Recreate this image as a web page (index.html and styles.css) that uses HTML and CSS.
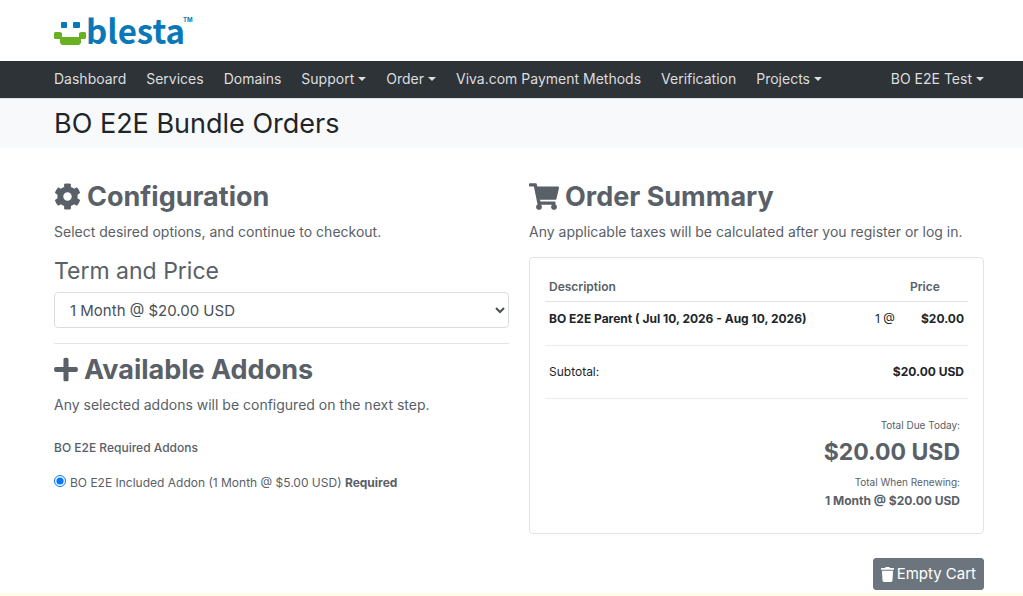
FILE: index.html
```html
<!DOCTYPE html>
<html lang="en">

<head>
    <meta charset="UTF-8">
    <meta name="viewport" content="width=device-width, initial-scale=1">
    <title>BO E2E Bundle Orders</title>
    <link rel="stylesheet" href="styles.css">
</head>

<body>
    <header class="header container">
        <a class="logo" href="#">
            <svg width="140" height="44" viewBox="0 0 140 44" role="img" aria-label="blesta">
                <g fill="#0878b8">
                    <rect x="7" y="14" width="6" height="6" rx="1" />
                    <rect x="19" y="14" width="7" height="6" rx="1" />
                    <text class="logo-text" x="32" y="36">blesta</text>
                    <text class="logo-tm" x="129" y="14">TM</text>
                </g>
                <path fill="#6ab023" d="M1 24h5l2 1v4h17v-4l2-1h4l1 1v5l-1 1h-4v4l-2 2H8l-2-2v-4H1l-1-1v-5z" />
            </svg>
        </a>
    </header>

    <nav class="navbar">
        <div class="container">
            <ul class="nav">
                <li><a href="#">Dashboard</a></li>
                <li><a href="#">Services</a></li>
                <li><a href="#">Domains</a></li>
                <li><a class="caret" href="#">Support</a></li>
                <li><a class="caret" href="#">Order</a></li>
                <li><a href="#">Viva.com Payment Methods</a></li>
                <li><a href="#">Verification</a></li>
                <li><a class="caret" href="#">Projects</a></li>
                <li class="account"><a class="caret" href="#">BO E2E Test</a></li>
            </ul>
        </div>
    </nav>

    <div class="title">
        <div class="container">
            <h1>BO E2E Bundle Orders</h1>
        </div>
    </div>

    <main class="container content">
        <section>
            <h2>
                <svg class="icon" width="27" height="27" viewBox="0 0 512 512" aria-hidden="true">
                    <path d="M487.400 315.700l-42.600-24.600c4.300-23.200 4.300-47 0-70.200l42.600-24.600c4.900-2.800 7.100-8.600 5.500-14-11.100-35.600-30-67.800-54.700-94.600-3.800-4.100-10-5.100-14.800-2.300L380.800 110c-17.900-15.400-38.500-27.300-60.800-35.100V25.800c0-5.600-3.900-10.500-9.400-11.700-36.700-8.200-74.300-7.800-109.200 0-5.500 1.200-9.400 6.100-9.400 11.700V75c-22.200 7.900-42.800 19.800-60.800 35.100L88.700 85.500c-4.900-2.800-11-1.900-14.800 2.300-24.700 26.700-43.600 58.900-54.700 94.600-1.700 5.400.6 11.200 5.500 14L67.300 221c-4.300 23.200-4.300 47 0 70.200l-42.600 24.600c-4.900 2.800-7.100 8.600-5.500 14 11.100 35.600 30 67.800 54.700 94.600 3.800 4.100 10 5.100 14.800 2.300l42.600-24.600c17.900 15.400 38.500 27.300 60.800 35.100v49.200c0 5.600 3.900 10.500 9.400 11.700 36.700 8.200 74.300 7.800 109.200 0 5.500-1.200 9.400-6.100 9.400-11.700v-49.200c22.200-7.900 42.800-19.800 60.800-35.100l42.600 24.600c4.900 2.800 11 1.900 14.800-2.300 24.700-26.700 43.600-58.900 54.700-94.600 1.500-5.500-.7-11.300-5.600-14.100zM256 336c-44.100 0-80-35.900-80-80s35.900-80 80-80 80 35.900 80 80-35.900 80-80 80z" />
                </svg>
                Configuration
            </h2>
            <p>Select desired options, and continue to checkout.</p>

            <label class="subtitle" for="term">Term and Price</label>
            <select class="form-control" id="term">
                <option>1 Month @ $20.00 USD</option>
            </select>

            <hr>

            <h2>
                <svg class="icon" width="24" height="27" viewBox="0 0 448 512" aria-hidden="true">
                    <path d="M416 208H272V64c0-17.700-14.300-32-32-32h-32c-17.700 0-32 14.300-32 32v144H32c-17.700 0-32 14.300-32 32v32c0 17.700 14.300 32 32 32h144v144c0 17.700 14.300 32 32 32h32c17.700 0 32-14.300 32-32V304h144c17.700 0 32-14.300 32-32v-32c0-17.700-14.300-32-32-32z" />
                </svg>
                Available Addons
            </h2>
            <p>Any selected addons will be configured on the next step.</p>

            <fieldset class="addons">
                <legend>BO E2E Required Addons</legend>
                <div class="radio">
                    <input type="radio" name="addon" id="addon" checked>
                    <label for="addon">BO E2E Included Addon (1 Month @ $5.00 USD) <strong>Required</strong></label>
                </div>
            </fieldset>
        </section>

        <section>
            <h2>
                <svg class="icon" width="30" height="27" viewBox="0 0 576 512" aria-hidden="true">
                    <path d="M528.100 301.300l47.300-208C578.800 78.300 567.400 64 552 64H159.200l-9.200-44.800C147.800 8 137.900 0 126.500 0H24C10.700 0 0 10.700 0 24v16c0 13.300 10.700 24 24 24h69.900l70.200 343.400C147.300 417.100 136 435.200 136 456c0 30.900 25.100 56 56 56s56-25.100 56-56c0-15.700-6.400-29.800-16.800-40h209.600C430.400 426.200 424 440.300 424 456c0 30.900 25.100 56 56 56s56-25.100 56-56c0-22.200-12.900-41.300-31.600-50.400l5.500-24.300c3.400-15-8-29.300-23.400-29.300H218.100l-6.500-32h293.100c11.200 0 20.900-7.800 23.400-18.700z" />
                </svg>
                Order Summary
            </h2>
            <p>Any applicable taxes will be calculated after you register or log in.</p>

            <div class="card">
                <table>
                    <thead>
                        <tr>
                            <th>Description</th>
                            <th class="qty"></th>
                            <th class="price">Price</th>
                        </tr>
                    </thead>
                    <tbody>
                        <tr>
                            <td><strong>BO E2E Parent ( Jul 10, 2026 - Aug 10, 2026)</strong></td>
                            <td class="qty">1 @</td>
                            <td class="amount">$20.00</td>
                        </tr>
                        <tr class="subtotal">
                            <td>Subtotal:</td>
                            <td class="amount" colspan="2">$20.00 USD</td>
                        </tr>
                    </tbody>
                </table>
                <div class="totals">
                    <small>Total Due Today:</small>
                    <strong class="due">$20.00 USD</strong>
                    <small>Total When Renewing:</small>
                    <strong>1 Month @ $20.00 USD</strong>
                </div>
            </div>

            <div class="actions">
                <button class="btn" type="button">
                    <svg width="13" height="15" viewBox="0 0 448 512" aria-hidden="true">
                        <path d="M432 32H312l-9.400-18.700A24 24 0 0 0 281.100 0H166.800a23.700 23.700 0 0 0-21.400 13.300L136 32H16A16 16 0 0 0 0 48v32a16 16 0 0 0 16 16h416a16 16 0 0 0 16-16V48a16 16 0 0 0-16-16zM53.200 467a48 48 0 0 0 47.900 45h245.800a48 48 0 0 0 47.900-45L416 128H32z" />
                    </svg>
                    Empty Cart
                </button>
            </div>
        </section>
    </main>

    <footer class="footer"></footer>
</body>

</html>
```

FILE: styles.css
```css
* {
    box-sizing: border-box;
}

body {
    margin: 0;
    font-family: Inter, "Liberation Sans", sans-serif;
    font-size: 14px;
    line-height: 20px;
    color: #596067;
    background: #fff;
}

.container {
    padding: 0 39px 0 54px;
}

/* header */
.header {
    height: 61px;
    padding-top: 8px;
}

.logo {
    display: inline-block;
}

.logo svg {
    display: block;
    overflow: visible;
}

.logo-text {
    font-family: "Noto Sans CJK SC", sans-serif;
    font-size: 33px;
    font-weight: bold;
}

.logo-tm {
    font-size: 6px;
    font-weight: bold;
}

/* navigation */
.navbar {
    background: #2e3338;
    border-bottom: 1px solid #dee2e6;
}

.nav {
    display: flex;
    gap: 20px;
    margin: 0;
    padding: 8px 0 9px;
    list-style: none;
    white-space: nowrap;
}

.nav a {
    color: #dcdddf;
    text-decoration: none;
}

.account {
    margin-left: auto;
}

.caret::after {
    content: "";
    display: inline-block;
    margin-left: 4px;
    vertical-align: 3px;
    border: 4px solid transparent;
    border-top-color: currentColor;
    border-bottom: 0;
}

/* page title */
.title {
    background: #f8f9fb;
}

.title h1 {
    margin: 0;
    padding: 8px 0 7px;
    font-size: 27px;
    font-weight: 400;
    line-height: 34px;
    color: #212529;
}

/* content */
.content {
    display: grid;
    grid-template-columns: 1fr 1fr;
    gap: 20px;
    padding-top: 32px;
}

h2 {
    display: flex;
    align-items: center;
    gap: 6px;
    margin: 0 0 8px;
    font-size: 27px;
    font-weight: 700;
    line-height: 34px;
}

.icon {
    margin-bottom: 2px;
}

.icon,
.btn svg {
    fill: currentColor;
}

p {
    margin: 0 0 15px;
}

.subtitle {
    display: block;
    margin-bottom: 7px;
    font-size: 23px;
    line-height: 28px;
}

.form-control {
    display: block;
    width: 100%;
    height: 36px;
    padding: 0 11px;
    border: 1px solid #dadee2;
    border-radius: 4px;
    background: #fff;
    color: #495057;
    font-family: inherit;
    font-size: 15px;
}

hr {
    margin: 15px 0 9px;
    border: 0;
    border-top: 1px solid #e5e5e5;
}

.addons {
    margin: 0;
    padding: 0;
    border: 0;
    font-size: 12px;
}

.addons legend {
    padding: 8px 0 15px;
    font-weight: 500;
}

.radio {
    display: flex;
    align-items: center;
    gap: 4px;
}

.radio input {
    width: 12px;
    height: 12px;
    margin: 0 0 5px;
    accent-color: #0075ff;
}

/* order summary */
.card {
    padding: 15px;
    border: 1px solid #e3e4e6;
    border-radius: 4px;
}

table {
    width: 100%;
    border-collapse: collapse;
    font-size: 12px;
    color: #212529;
}

th {
    padding: 4px;
    text-align: left;
    font-weight: 600;
    color: #596067;
    border-bottom: 1px solid #dee2e6;
}

td {
    padding: 7px 4px 16px;
    border-bottom: 1px solid #ececee;
}

.price {
    width: 62px;
}

.qty {
    width: 35px;
    white-space: nowrap;
}

.amount {
    font-weight: 700;
    text-align: right;
}

.subtotal td {
    padding: 16px 4px;
}

.totals {
    display: flex;
    flex-direction: column;
    align-items: flex-end;
    padding: 17px 8px 7px;
    font-size: 12px;
}

.totals small {
    font-size: 10px;
    line-height: 18px;
}

.totals .due {
    margin-bottom: 3px;
    font-size: 23px;
    line-height: 36px;
}

.actions {
    display: flex;
    justify-content: flex-end;
    margin-top: 24px;
}

.btn {
    display: flex;
    align-items: center;
    gap: 3px;
    padding: 5px 7px;
    border: 1px solid #6c757d;
    border-radius: 3px;
    background: #6c757d;
    color: #fff;
    font-family: inherit;
    font-size: 15px;
    line-height: 20px;
}

.footer {
    height: 3px;
    margin-top: 3px;
    background: #fdfde8;
}
```
